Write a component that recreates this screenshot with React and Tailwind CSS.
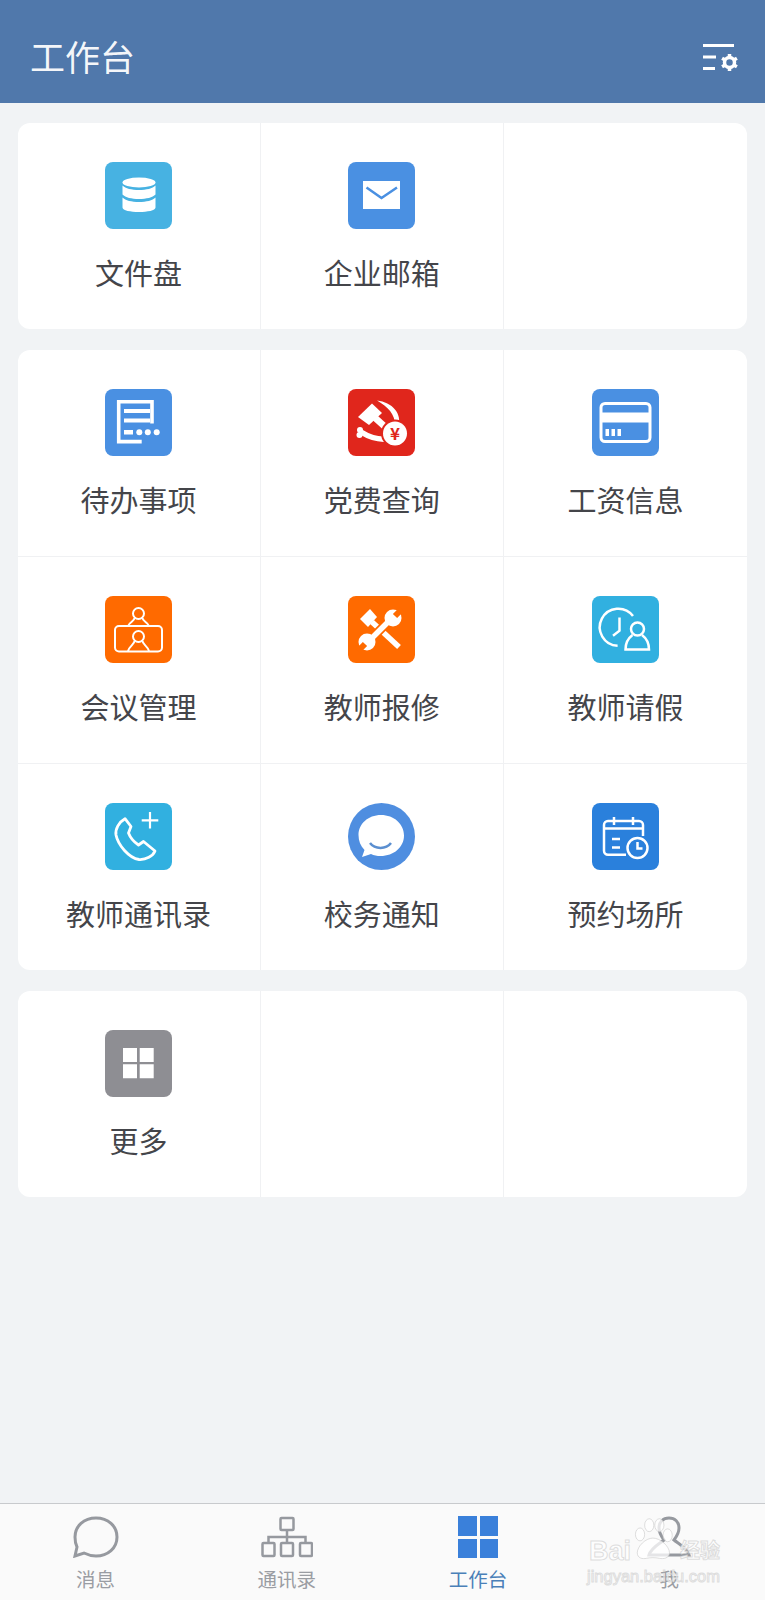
import React from 'react';

const font = { fontFamily: '"Noto Sans CJK SC", "Noto Sans", sans-serif' };

const DbIcon = () => (
  <g fill="#fff">
    <ellipse cx="34" cy="20.500" rx="16.500" ry="5" />
    <path d="M17.500 23.500c3 3 9 4.500 16.500 4.500s13.500-1.500 16.500-4.500v9c-3 3-9 4.500-16.500 4.500s-13.500-1.500-16.500-4.500z" />
    <path d="M17.500 35.500c3 3 9 4.500 16.500 4.500s13.500-1.500 16.500-4.500v10c0 3-8 4.500-16.500 4.500s-16.500-1.500-16.500-4.500z" />
  </g>
);

const MailIcon = () => (
  <>
    <rect x="15" y="19" width="37" height="28" fill="#fff" />
    <path d="M18.500 25.500l15 10.500 15.500-10.500" fill="none" stroke="#4a90e2" strokeWidth="2.500" />
  </>
);

const DocIcon = () => (
  <>
    <path d="M47 34.500V12.700H13.700v39.900h23" fill="none" stroke="#fff" strokeWidth="3.600" />
    <path d="M19 22h26M19 31.500h26" stroke="#fff" strokeWidth="4" />
    <rect x="19" y="41" width="9" height="4.500" fill="#fff" />
    <circle cx="34.300" cy="43.300" r="3" fill="#fff" />
    <circle cx="42.800" cy="43.300" r="3" fill="#fff" />
    <circle cx="51.700" cy="43.300" r="3" fill="#fff" />
  </>
);

const PartyIcon = () => (
  <>
    <path d="M10 28L24 14.500 34 24 21 36z" fill="#fff" />
    <path d="M25 27l20 18" stroke="#fff" strokeWidth="6.500" />
    <path d="M29 11.500C44 13 55 25 50 38l-3-2C47 25 40 18 29 11.500z" fill="#fff" />
    <path d="M13 43c8 5 16 8 26 7" fill="none" stroke="#fff" strokeWidth="5.500" />
    <circle cx="12" cy="41" r="3" fill="#fff" />
    <circle cx="11.500" cy="46" r="3" fill="#fff" />
    <circle cx="47" cy="44.500" r="14" fill="#e0261c" />
    <circle cx="47" cy="44.500" r="12" fill="#fff" />
    <text x="47" y="50.500" textAnchor="middle" fontSize="17" fontWeight="700" fill="#e0261c" style={font}>¥</text>
  </>
);

const CardIcon = () => (
  <>
    <rect x="9" y="14.500" width="49" height="38" rx="4" fill="none" stroke="#fff" strokeWidth="3" />
    <rect x="9" y="23.500" width="49" height="10" fill="#fff" />
    <path d="M13.500 40h3.500v7h-3.500zM19.500 40H23v7h-3.500zM25.500 40H29v7h-3.500z" fill="#fff" />
  </>
);

const MeetingIcon = () => (
  <g fill="none" stroke="#fff" strokeWidth="2">
    <rect x="10" y="30" width="47" height="25.500" rx="4" />
    <circle cx="33.500" cy="17.500" r="5.500" />
    <path d="M29.500 22c0 3-5 4-6.500 8M37.500 22c0 3 5 4 6.500 8" />
    <circle cx="33.500" cy="40.500" r="5.500" />
    <path d="M29.500 45c0 3-5 5-6.500 10M37.500 45c0 3 5 5 6.500 10" />
  </g>
);

const RepairIcon = () => (
  <>
    <path d="M12 23l10-10 7 8-9 10z" fill="#fff" />
    <path d="M24 26l27 25" stroke="#fff" strokeWidth="5.500" />
    <path d="M19 47L45 21" stroke="#ff6a00" strokeWidth="9" />
    <path d="M19 47L45 21" stroke="#fff" strokeWidth="5.500" />
    <circle cx="45" cy="22" r="8.500" fill="#fff" />
    <circle cx="19" cy="46" r="8.500" fill="#fff" />
    <path d="M47 20l7-7M17 48l-7 7" stroke="#ff6a00" strokeWidth="6" />
  </>
);

const LeaveIcon = () => (
  <g fill="none" stroke="#fff" strokeWidth="2.500">
    <path d="M41 20A18.500 18.500 0 1 0 25.600 49.700" />
    <path d="M27.500 21.400v13.300l-6.500 5" />
    <circle cx="45.500" cy="33" r="6.500" />
    <path d="M40.500 39c-4 3-7 8-7 14.500h23.500c0-6.500-3-11.500-7-14.500" />
  </g>
);

const PhoneIcon = () => (
  <>
    <path d="M45 9v16.600M36.700 17.300h16.600" stroke="#fff" strokeWidth="2.200" />
    <path
      d="M20 15.700C14 19 10 26 11 32c2 10 13 23 23 24.500 7 .5 14-3.500 16-8.500L38.500 38.500 33.500 42c-4.500-3-8.500-8-10-12L26 23.500z"
      fill="none"
      stroke="#fff"
      strokeWidth="2.800"
      strokeLinejoin="round"
    />
  </>
);

const ChatIcon = () => (
  <>
    <circle cx="33.500" cy="33.500" r="33.500" fill="#4f8ee0" />
    <path d="M33 12C20 12 10.500 21 10.500 32c0 6 2 11 6 15l-2.500 7 9-3c3 1.500 6 2 9.500 2C46 53 56 44 56 32.500S46 12 33 12z" fill="#fff" />
    <path d="M22 40c5 6.500 16 6.500 21 0" fill="none" stroke="#5b8fd0" strokeWidth="2.500" />
  </>
);

const CalendarIcon = () => (
  <g fill="none" stroke="#fff" strokeWidth="2.500">
    <path d="M34 51.700H16a4 4 0 0 1-4-4V22a4 4 0 0 1 4-4h31a4 4 0 0 1 4 4v11" />
    <path d="M12 25.500h39M22 14v8M41 14v8M20 36h8M20 44.500h8" />
    <circle cx="45.500" cy="45" r="10" />
    <path d="M45.500 39v6.500h5" />
  </g>
);

const MoreIcon = () => (
  <path d="M18 18h14v14H18zM34.700 18h14v14h-14zM18 34.300h14v14H18zM34.700 34.300h14v14h-14z" fill="#fff" />
);

const Cell = ({ bg, label, children, round }) => (
  <div className="flex h-[207px] flex-col items-center border-r border-b border-[#f0f1f3] pt-[39px] [&:nth-child(3n)]:border-r-0 [&:nth-last-child(-n+3)]:h-[206px] [&:nth-last-child(-n+3)]:border-b-0">
    {label && (
      <>
        <svg
          viewBox="0 0 67 67"
          className={`h-[67px] w-[67px] ${round ? '' : 'rounded-[8px]'}`}
          style={round ? undefined : { backgroundColor: bg }}
        >
          {children}
        </svg>
        <span className="mt-[23px] text-[29px] leading-[40px] text-[#44454a]">{label}</span>
      </>
    )}
  </div>
);

const Card = ({ children }) => (
  <div className="grid grid-cols-3 overflow-hidden rounded-[12px] bg-white">{children}</div>
);

const TabLabel = ({ active, children }) => (
  <span className={`mt-[8px] text-[19.5px] leading-[26px] ${active ? 'text-[#4a80b8]' : 'text-[#9a9da3]'}`}>
    {children}
  </span>
);

export default function App() {
  return (
    <div className="relative flex h-[1600px] w-[765px] flex-col bg-[#f1f3f5]" style={font}>
      <header className="flex h-[103px] items-center justify-between bg-[#5078ab] pt-[9px] pr-[27px] pl-[30px]">
        <h1 className="text-[35px] leading-[48px] font-normal text-white/95">工作台</h1>
        <svg viewBox="0 0 35 30" className="mt-[5px] h-[30px] w-[35px]" fill="#fff">
          <rect x="0" y="0" width="31" height="3" />
          <rect x="0" y="11.500" width="13" height="3" />
          <rect x="0" y="23" width="12" height="3" />
          <g stroke="#fff" strokeWidth="3.500">
            <circle cx="26.500" cy="18.500" r="5" fill="none" />
            <path d="M26.500 10v3M26.500 24v3M19.100 14.200l2.600 1.500M31.300 21.300l2.600 1.500M19.100 22.800l2.600-1.500M31.300 15.700l2.600-1.500" />
          </g>
        </svg>
      </header>

      <main className="flex flex-1 flex-col gap-[21px] pt-[19.5px] pr-[18px] pl-[17.5px]">
        <Card>
          <Cell bg="#47b2e2" label="文件盘"><DbIcon /></Cell>
          <Cell bg="#4a90e2" label="企业邮箱"><MailIcon /></Cell>
          <Cell />
        </Card>
        <Card>
          <Cell bg="#4a90e2" label="待办事项"><DocIcon /></Cell>
          <Cell bg="#e0261c" label="党费查询"><PartyIcon /></Cell>
          <Cell bg="#4a90e2" label="工资信息"><CardIcon /></Cell>
          <Cell bg="#ff6a00" label="会议管理"><MeetingIcon /></Cell>
          <Cell bg="#ff6a00" label="教师报修"><RepairIcon /></Cell>
          <Cell bg="#31b0e0" label="教师请假"><LeaveIcon /></Cell>
          <Cell bg="#31b0e0" label="教师通讯录"><PhoneIcon /></Cell>
          <Cell round label="校务通知"><ChatIcon /></Cell>
          <Cell bg="#2a80dc" label="预约场所"><CalendarIcon /></Cell>
        </Card>
        <Card>
          <Cell bg="#8e8e93" label="更多"><MoreIcon /></Cell>
          <Cell />
          <Cell />
        </Card>
      </main>

      <nav className="grid h-[97px] grid-cols-4 border-t border-[#c8cacd] bg-[#fafafa] pt-[12px]">
        <div className="flex flex-col items-center">
          <svg viewBox="0 0 46 42" className="h-[42px] w-[46px]" fill="none" stroke="#96999f" strokeWidth="3">
            <path d="M23 2C11 2 2 10 2 21c0 4 1 8 2 10l-2 9 9-3c4 2 8 3 12 3 12 0 21-8 21-19S35 2 23 2z" />
          </svg>
          <TabLabel>消息</TabLabel>
        </div>
        <div className="flex flex-col items-center">
          <svg viewBox="0 0 52 42" className="h-[42px] w-[52px]" fill="none" stroke="#96999f" strokeWidth="2.500">
            <rect x="19.500" y="2" width="13" height="12" rx="1" />
            <rect x="1.500" y="27" width="12" height="13" rx="1" />
            <rect x="20" y="27" width="12" height="13" rx="1" />
            <rect x="39" y="27" width="12" height="13" rx="1" />
            <path d="M26 14v13M7.500 27v-6h37v6" />
          </svg>
          <TabLabel>通讯录</TabLabel>
        </div>
        <div className="flex flex-col items-center">
          <div className="grid h-[42px] w-[40px] grid-cols-2 gap-[3px]">
            <span className="bg-[#3a80da]" />
            <span className="bg-[#3a80da]" />
            <span className="bg-[#3a80da]" />
            <span className="bg-[#3a80da]" />
          </div>
          <TabLabel active>工作台</TabLabel>
        </div>
        <div className="flex flex-col items-center">
          <svg viewBox="0 0 46 42" className="h-[42px] w-[46px]" fill="none" stroke="#96999f" strokeWidth="3">
            <path d="M18 24c-5 4-13 8-15 15h40c-2-7-10-11-15-15 3-4 5-8 5-12 0-6-4-10-10-10S13 6 13 12c0 4 2 8 5 12z" />
          </svg>
          <TabLabel>我</TabLabel>
        </div>
      </nav>

      {/* baidu watermark */}
      <div className="absolute top-[1516px] left-[586px] h-[66px] w-[140px] text-white/75 [-webkit-text-stroke:1px_rgba(190,190,190,0.5)]">
        <span className="absolute top-[20px] left-[3px] font-['Liberation_Sans'] text-[27px] leading-[30px] font-bold">Bai</span>
        <svg viewBox="0 0 50 50" className="absolute top-[0px] left-[43px] h-[46px] w-[46px]" fill="#ffffff" fillOpacity="0.75" stroke="#c4c4c4" strokeOpacity="0.6">
          <ellipse cx="12" cy="20" rx="5" ry="7" />
          <ellipse cx="22" cy="10" rx="5" ry="7" />
          <ellipse cx="33" cy="10" rx="5" ry="7" />
          <ellipse cx="42" cy="21" rx="5" ry="7" />
          <path d="M26 24c-8 0-17 9-17 16 0 6 6 7 10 6 5-1 9-1 14 0 4 1 11 0 11-6 0-7-10-16-18-16z" />
        </svg>
        <span className="absolute top-[21px] left-[94px] text-[20px] leading-[26px] font-bold whitespace-nowrap">经验</span>
        <span className="absolute top-[50px] left-[1px] font-['Liberation_Sans'] text-[16.500px] leading-[20px] whitespace-nowrap">jingyan.baidu.com</span>
      </div>
    </div>
  );
}
